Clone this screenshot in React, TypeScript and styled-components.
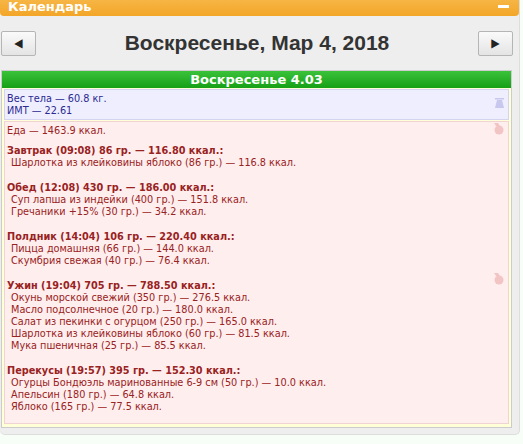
import React from "react";
import styled, { createGlobalStyle } from "styled-components";

const G = createGlobalStyle`
  body { margin:0; background:#f7fdf7; font-family:"DejaVu Sans Condensed","DejaVu Sans",sans-serif; }
`;
const Panel = styled.div`width:519px;background:#eeeeee;border-radius:0 0 5px 5px;padding-bottom:6px;border-right:1px solid #ddd;border-bottom:1px solid #ddd;`;
const Header = styled.div`height:19px;background:linear-gradient(#f7b84a,#f3a628);border-radius:0 0 4px 4px;display:flex;justify-content:space-between;align-items:center;padding:0 8px;color:#fff;font:bold 13px "DejaVu Sans",sans-serif;margin-top:-3px;`;
const Minus = styled.div`width:11px;height:3px;background:#fff;margin-right:2px;`;
const Nav = styled.div`display:flex;align-items:center;justify-content:space-between;padding:14px 6px 0 1px;height:26px;`;
const Btn = styled.div`width:33px;height:23px;border:1px solid #b5b5b5;background:linear-gradient(#fafafa,#e4e4e4);border-radius:2px;display:flex;align-items:center;justify-content:center;font-size:12px;color:#222;`;
const Title = styled.div`font:bold 21px "Liberation Sans",Arial,sans-serif;color:#333;`;
const Box = styled.div`margin:14px 7px 0 1px;border:1px solid #ccc;background:#fff;`;
const GreenBar = styled.div`background:linear-gradient(#3bc23b,#16a016);color:#fff;font:bold 13px "DejaVu Sans",sans-serif;text-align:center;height:17px;line-height:17px;`;
const Inner = styled.div`background:#ffffd8;padding:1px 2px 2px 2px;`;
const Card = styled.div<{ $bg: string; $bd: string; $c: string }>`position:relative;background:${p=>p.$bg};border:1px solid ${p=>p.$bd};color:${p=>p.$c};font-size:10.8px;line-height:12px;padding:3px 1px 2px 2px;margin-bottom:1px;white-space:pre;`;
const Line = styled.div<{ $b?: boolean; $ind?: boolean; $gap?: number }>`font-weight:${p=>p.$b?"bold":"normal"};padding-left:${p=>p.$ind?"4px":"0"};margin-top:${p=>p.$gap||0}px;`;
const Icon = styled.svg<{ $top: number }>`position:absolute;right:4px;top:${p=>p.$top}px;`;

const Apple = ({ top }: { top: number }) => (
  <Icon $top={top} width="11" height="12" viewBox="0 0 11 12"><path d="M1 0h4l2 3h-4z" fill="#f2c4c4"/><circle cx="6" cy="7" r="4.5" fill="#f2c4c4"/></Icon>
);

const meals: [string, string[]][] = [
  ["Завтрак (09:08) 86 гр. — 116.80 ккал.:", ["Шарлотка из клейковины яблоко (86 гр.) — 116.8 ккал."]],
  ["Обед (12:08) 430 гр. — 186.00 ккал.:", ["Суп лапша из индейки (400 гр.) — 151.8 ккал.", "Гречаники +15% (30 гр.) — 34.2 ккал."]],
  ["Полдник (14:04) 106 гр. — 220.40 ккал.:", ["Пицца домашняя (66 гр.) — 144.0 ккал.", "Скумбрия свежая (40 гр.) — 76.4 ккал."]],
  ["Ужин (19:04) 705 гр. — 788.50 ккал.:", ["Окунь морской свежий (350 гр.) — 276.5 ккал.", "Масло подсолнечное (20 гр.) — 180.0 ккал.", "Салат из пекинки с огурцом (250 гр.) — 165.0 ккал.", "Шарлотка из клейковины яблоко (60 гр.) — 81.5 ккал.", "Мука пшеничная (25 гр.) — 85.5 ккал."]],
  ["Перекусы (19:57) 395 гр. — 152.30 ккал.:", ["Огурцы Бондюэль маринованные 6-9 см (50 гр.) — 10.0 ккал.", "Апельсин (180 гр.) — 64.8 ккал.", "Яблоко (165 гр.) — 77.5 ккал."]],
];

export default function App() {
  return (
    <>
      <G />
      <Panel>
        <Header><span>Календарь</span><Minus /></Header>
        <Nav><Btn>◀</Btn><Title>Воскресенье, Мар 4, 2018</Title><Btn>▶</Btn></Nav>
        <Box>
          <GreenBar>Воскресенье 4.03</GreenBar>
          <Inner>
            <Card $bg="#eeeeff" $bd="#d4d4f0" $c="#2a2a90">
              <Line>Вес тела — 60.8 кг.</Line>
              <Line>ИМТ — 22.61</Line>
              <Icon $top={8} width="9" height="10" viewBox="0 0 9 10"><rect x="0" y="0" width="9" height="1.5" fill="#c8c8ee"/><path d="M2 2h5l2 8H0z" fill="#c8c8ee"/></Icon>
            </Card>
            <Card $bg="#ffeeee" $bd="#f0d4d4" $c="#992222" style={{ height: 296 }}>
              <Apple top={1} />
              <Apple top={151} />
              <Line>Еда — 1463.9 ккал.</Line>
              {meals.map(([t, items], i) => (
                <div key={i}>
                  <Line $b $gap={i === 0 ? 8 : 13}>{t}</Line>
                  {items.map((x) => <Line $ind key={x}>{x}</Line>)}
                </div>
              ))}
            </Card>
          </Inner>
        </Box>
      </Panel>
    </>
  );
}
